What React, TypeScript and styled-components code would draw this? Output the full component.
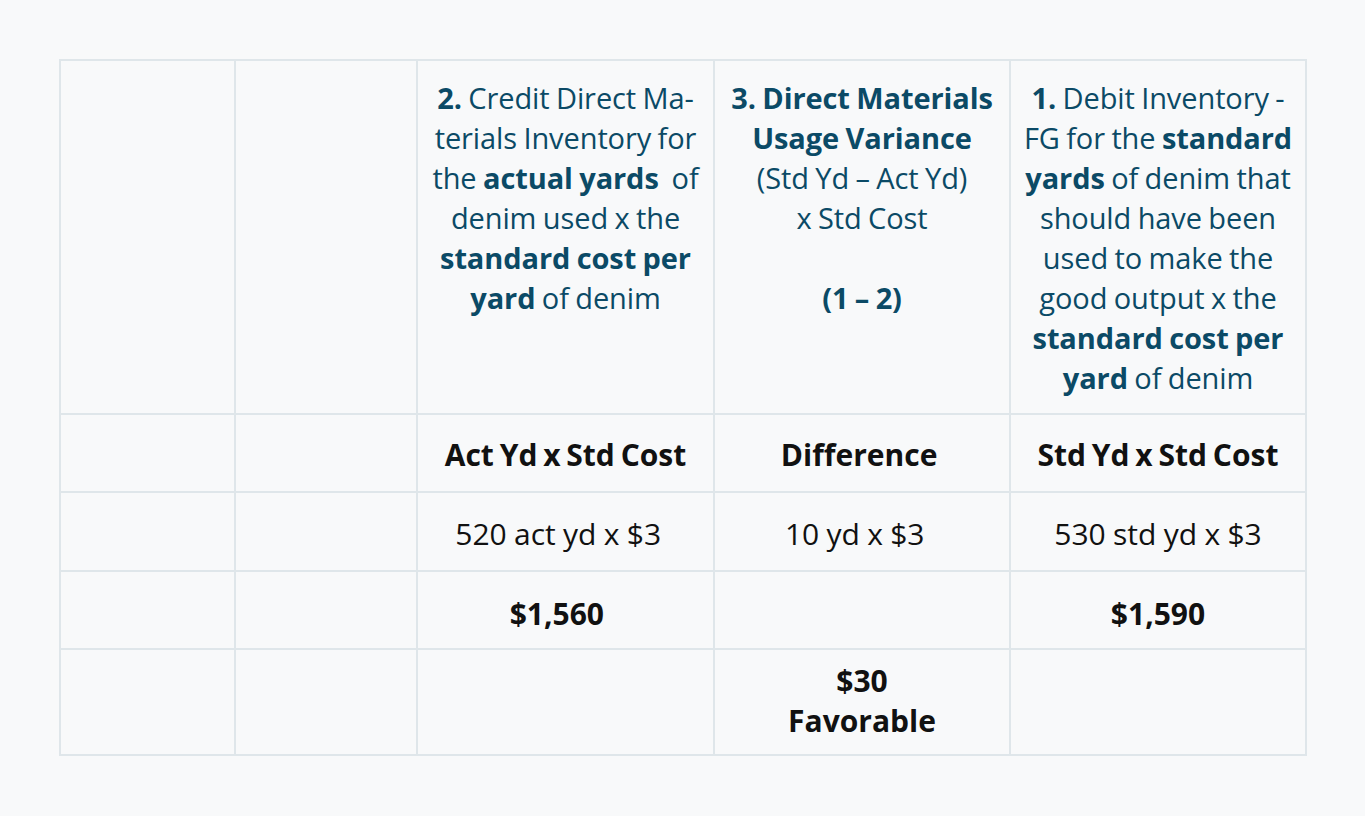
import React from 'react'
import styled, { createGlobalStyle } from 'styled-components'

const GlobalStyle = createGlobalStyle`
    html, body {
        margin: 0;
        padding: 0;
        background: #f8f9fa;
    }
    body {
        font-family: "Open Sans", "Liberation Sans", sans-serif;
    }
`

const Page = styled.div`
    padding: 59px 59px 60px 59px;
    min-height: 816px;
    box-sizing: border-box;
`

const Table = styled.table`
    width: 1248px;
    border-collapse: collapse;
    table-layout: fixed;
    background: #f8f9fa;
    border: 2px solid #dfe6ea;
`

const Row = styled.tr<{ $h: number }>`
    height: ${p => p.$h}px;
`

const Cell = styled.td<{ $shift?: number }>`
    border: 2px solid #dfe6ea;
    padding: ${p => 12 + (p.$shift ?? 2)}px 6px ${p => 12 - (p.$shift ?? 2)}px;
    text-align: center;
    vertical-align: middle;
    font-size: 30px;
    line-height: 40px;
    color: #111;
`

const HeadCell = styled(Cell)`
    padding: 17px 6px 12px;
    vertical-align: top;
    font-size: 29px;
    letter-spacing: -0.1px;
    word-spacing: -1px;
    color: #0b4a66;
`

const Strong = styled.b`
    font-weight: 700;
`

const Label = styled.span`
    font-weight: 700;
    word-spacing: -2px;
    color: #111;
`

const Value = styled.span`
    color: #111;
    word-spacing: -0.5px;
`

const cols = [175, 182, 297, 296, 296]

const App = () => {
    return (
        <Page>
            <GlobalStyle />
            <Table>
                <colgroup>
                    {cols.map((w, i) => <col key={i} style={{ width: w }} />)}
                </colgroup>
                <tbody>
                    <Row $h={354}>
                        <Cell />
                        <Cell />
                        <HeadCell>
                            <Strong>2.</Strong> Credit Direct Ma-<br />
                            terials Inventory for<br />
                            the <Strong>actual yards</Strong>&nbsp; of<br />
                            denim used x the<br />
                            <Strong>standard cost per</Strong><br />
                            <Strong>yard</Strong> of denim
                        </HeadCell>
                        <HeadCell>
                            <Strong>3. Direct Materials</Strong><br />
                            <Strong>Usage Variance</Strong><br />
                            (Std Yd – Act Yd)<br />
                            x Std Cost<br />
                            <br />
                            <Strong>(1 – 2)</Strong>
                        </HeadCell>
                        <HeadCell>
                            <Strong>1.</Strong> Debit Inventory -<br />
                            FG for the <Strong>standard</Strong><br />
                            <Strong>yards</Strong> of denim that<br />
                            should have been<br />
                            used to make the<br />
                            good output x the<br />
                            <Strong>standard cost per</Strong><br />
                            <Strong>yard</Strong> of denim
                        </HeadCell>
                    </Row>
                    <Row $h={78}>
                        <Cell />
                        <Cell />
                        <Cell><Label>Act Yd x Std Cost</Label></Cell>
                        <Cell><Label>Difference&nbsp;</Label></Cell>
                        <Cell><Label>Std Yd x Std Cost</Label></Cell>
                    </Row>
                    <Row $h={79}>
                        <Cell />
                        <Cell />
                        <Cell><Value>520 act yd x $3&nbsp;&nbsp;</Value></Cell>
                        <Cell><Value>10 yd x $3&nbsp;&nbsp;</Value></Cell>
                        <Cell><Value>530 std yd x $3</Value></Cell>
                    </Row>
                    <Row $h={78}>
                        <Cell />
                        <Cell />
                        <Cell $shift={4}><Label>$1,560&nbsp;&nbsp;&nbsp;</Label></Cell>
                        <Cell />
                        <Cell $shift={4}><Label>$1,590</Label></Cell>
                    </Row>
                    <Row $h={105}>
                        <Cell />
                        <Cell />
                        <Cell />
                        <Cell $shift={-1}><Label>$30<br />Favorable</Label></Cell>
                        <Cell />
                    </Row>
                </tbody>
            </Table>
        </Page>
    )
}

export default App
